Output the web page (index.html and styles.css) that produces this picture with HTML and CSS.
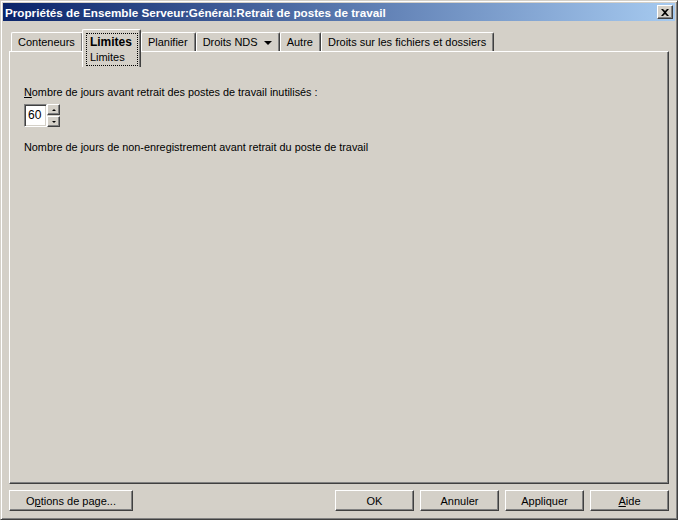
FILE: index.html
```html
<!DOCTYPE html>
<html lang="fr">
<head>
<meta charset="utf-8">
<title>Propriétés</title>
<link rel="stylesheet" href="styles.css">
</head>
<body>
<div class="window">
  <div class="titlebar">
    <span class="title">Propriétés de Ensemble Serveur:Général:Retrait de postes de travail</span>
    <span class="close">
      <svg width="8" height="7" viewBox="0 0 8 7"><path d="M0 0h2l2 2 2-2h2L5 3.5 8 7H6L4 5 2 7H0l3-3.5z" fill="#000"/></svg>
    </span>
  </div>
  <div class="client">
    <div class="tabs">
      <div class="tab">Conteneurs</div>
      <div class="tab tab-sel">
        <div class="focus">
          <div class="sel-main">Limites</div>
          <div class="sel-sub">Limites</div>
        </div>
      </div>
      <div class="tab">Planifier</div>
      <div class="tab">Droits NDS <span class="caret"></span></div>
      <div class="tab">Autre</div>
      <div class="tab">Droits sur les fichiers et dossiers</div>
    </div>
    <div class="panel">
      <div class="label"><u>N</u>ombre de jours avant retrait des postes de travail inutilisés :</div>
      <div class="spinner">
        <div class="field">60</div>
        <div class="spin-btns">
          <div class="spin-btn"><span class="arr-up"></span></div>
          <div class="spin-btn"><span class="arr-down"></span></div>
        </div>
      </div>
      <div class="hint">Nombre de jours de non-enregistrement avant retrait du poste de travail</div>
    </div>
    <div class="buttons">
      <div class="btn btn-wide">O<u>p</u>tions de page...</div>
      <div class="spacer"></div>
      <div class="btn">OK</div>
      <div class="btn">Annuler</div>
      <div class="btn">Appliquer</div>
      <div class="btn"><u>A</u>ide</div>
    </div>
  </div>
</div>
</body>
</html>
```
FILE: styles.css
```css
html, body {
  margin: 0;
  padding: 0;
  background: #d4d0c8;
}
body {
  width: 678px;
  height: 520px;
  font-family: "Liberation Sans", Arial, sans-serif;
  font-size: 11px;
  color: #000;
}
.window {
  box-sizing: border-box;
  width: 678px;
  height: 520px;
  background: #d4d0c8;
  border-top: 1px solid #d4d0c8;
  border-left: 1px solid #d4d0c8;
  border-right: 1px solid #404040;
  border-bottom: 1px solid #404040;
  box-shadow: inset 1px 1px 0 #fff, inset -1px -1px 0 #808080;
  padding: 2px;
  display: flex;
  flex-direction: column;
}
.titlebar {
  height: 18px;
  background: linear-gradient(to right, #0a246a, #a6caf0);
  display: flex;
  align-items: center;
  justify-content: space-between;
  padding: 0 2px 0 2px;
}
.title {
  color: #fff;
  font-weight: bold;
  font-size: 11.7px;
  white-space: nowrap;
}
.close {
  box-sizing: border-box;
  width: 16px;
  height: 14px;
  background: #d4d0c8;
  border-top: 1px solid #fff;
  border-left: 1px solid #fff;
  border-right: 1px solid #404040;
  border-bottom: 1px solid #404040;
  box-shadow: inset -1px -1px 0 #808080;
  display: flex;
  align-items: center;
  justify-content: center;
  margin-right: 0;
}
.client {
  flex: 1;
  display: flex;
  flex-direction: column;
  padding: 8px 6px 6px 6px;
}
.tabs {
  height: 22px;
  display: flex;
  align-items: flex-start;
  padding-left: 2px;
  position: relative;
  z-index: 2;
}
.tab {
  box-sizing: border-box;
  margin-top: 3px;
  height: 19px;
  padding: 3px 7px 0 6px;
  border-top: 1px solid #fff;
  border-left: 1px solid #fff;
  border-right: 1px solid #404040;
  box-shadow: inset -1px 0 0 #808080;
  border-top-left-radius: 2px;
  border-top-right-radius: 2px;
  white-space: nowrap;
  display: flex;
  align-items: flex-start;
  gap: 6px;
}
.tab-sel {
  margin-top: 0;
  height: 38px;
  width: 59px;
  padding: 3px 2px 0 3px;
  background: #d4d0c8;
  margin-left: -1px;
  margin-right: 0;
}
.focus {
  box-sizing: border-box;
  width: 52px;
  height: 33px;
  border: 1px dotted #000;
  padding: 1px 0 0 3px;
}
.sel-main {
  font-weight: bold;
  font-size: 12px;
  line-height: 15px;
}
.sel-sub {
  line-height: 14px;
}
.caret {
  display: inline-block;
  width: 0;
  height: 0;
  border-left: 4px solid transparent;
  border-right: 4px solid transparent;
  border-top: 4px solid #000;
  margin-top: 5px;
}
.panel {
  box-sizing: border-box;
  height: 433px;
  border-top: 1px solid #fff;
  border-left: 1px solid #fff;
  border-right: 1px solid #404040;
  border-bottom: 1px solid #404040;
  box-shadow: inset -1px -1px 0 #808080;
  padding: 34px 14px 0 14px;
  position: relative;
  z-index: 1;
}
.label {
  line-height: 13px;
  font-size: 10.85px;
}
.spinner {
  display: flex;
  margin-top: 5px;
}
.field {
  box-sizing: border-box;
  width: 23px;
  height: 23px;
  background: #fff;
  border-top: 1px solid #808080;
  border-left: 1px solid #808080;
  border-right: 1px solid #fff;
  border-bottom: 1px solid #fff;
  box-shadow: inset 1px 1px 0 #404040, inset -1px -1px 0 #d4d0c8;
  font-size: 12px;
  line-height: 20px;
  padding-left: 3px;
}
.spin-btns {
  display: flex;
  flex-direction: column;
}
.spin-btn {
  box-sizing: border-box;
  width: 13px;
  height: 11px;
  margin-bottom: 1px;
  border-top: 1px solid #fff;
  border-left: 1px solid #fff;
  border-right: 1px solid #404040;
  border-bottom: 1px solid #404040;
  box-shadow: inset -1px -1px 0 #808080;
  display: flex;
  align-items: center;
  justify-content: center;
}
.arr-up {
  width: 0;
  height: 0;
  border-left: 2px solid transparent;
  border-right: 2px solid transparent;
  border-bottom: 2px solid #000;
}
.arr-down {
  width: 0;
  height: 0;
  border-left: 2px solid transparent;
  border-right: 2px solid transparent;
  border-top: 2px solid #000;
}
.hint {
  margin-top: 13px;
  line-height: 13px;
  font-size: 10.85px;
}
.buttons {
  display: flex;
  margin-top: 6px;
  gap: 6px;
}
.spacer {
  flex: 1;
}
.btn {
  box-sizing: border-box;
  width: 79px;
  height: 21px;
  border-top: 1px solid #fff;
  border-left: 1px solid #fff;
  border-right: 1px solid #404040;
  border-bottom: 1px solid #404040;
  box-shadow: inset -1px -1px 0 #808080;
  display: flex;
  align-items: center;
  justify-content: center;
}
.btn-wide {
  width: 124px;
}
```
